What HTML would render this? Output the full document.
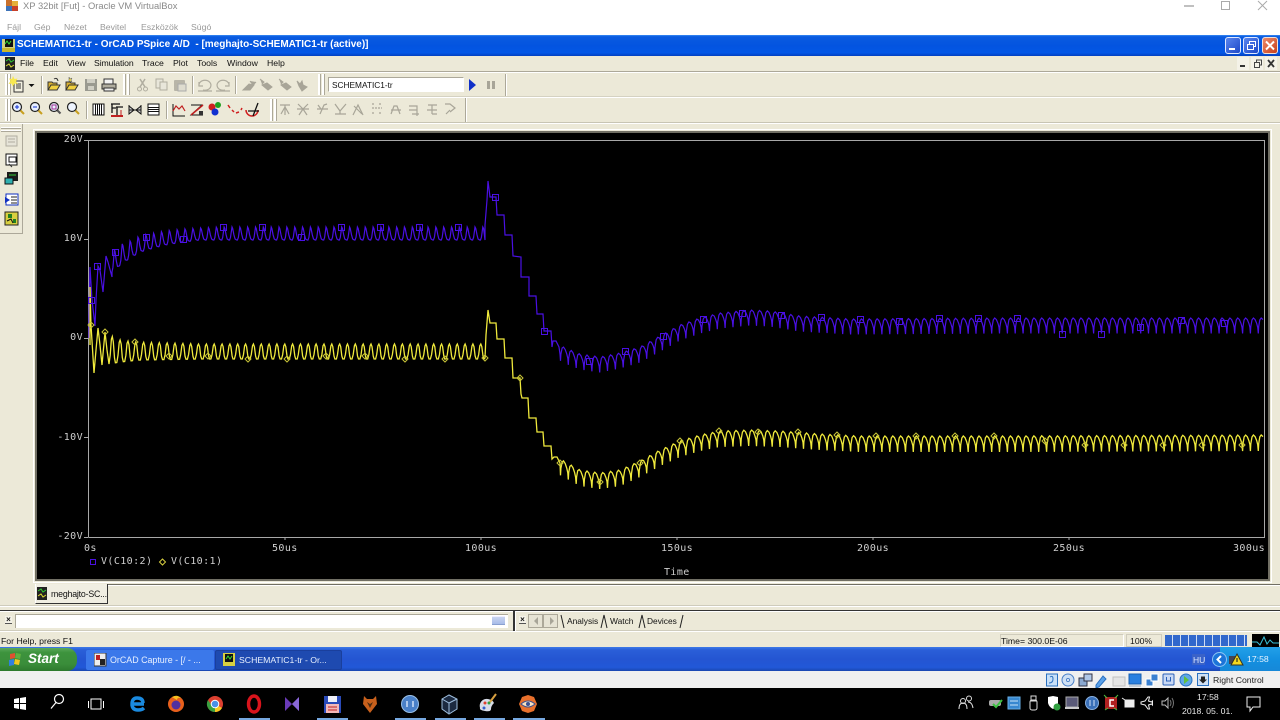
<!DOCTYPE html>
<html><head><meta charset="utf-8"><style>
html,body{margin:0;padding:0;background:#ece9d8;width:1280px;height:720px;overflow:hidden}
body{font-family:"Liberation Sans",sans-serif;font-size:8.7px;color:#111;filter:blur(.3px)}
div,span,svg{position:absolute;box-sizing:border-box}
.t{white-space:nowrap;line-height:12px}
.m{color:#999;font-size:8.7px}
.pl{font-family:"DejaVu Sans Mono",monospace;font-size:10px;letter-spacing:.4px;color:#cfcfcf;white-space:nowrap;line-height:10px}
.mn{top:57px;font-size:8.7px;color:#111;white-space:nowrap;line-height:12px}
.grip{width:3px;background:#fff;border-right:1px solid #aca899;}
.sep{width:2px;background:#fff;border-left:1px solid #aca899}
</style></head><body>

<!-- VirtualBox window chrome -->
<div style="left:0;top:0;width:1280px;height:36px;background:#fff"></div>
<svg style="left:6px;top:0" width="13" height="12" viewBox="0 0 13 12"><rect x="0" y="0" width="6" height="6" fill="#c9702a"/><rect x="6" y="1" width="6" height="5" fill="#e4b03a"/><rect x="0" y="6" width="6" height="5" fill="#3e73b8"/><rect x="6" y="6" width="6" height="5" fill="#c8402a"/></svg>
<div class="t" style="left:23px;top:0px;font-size:9.4px;color:#8a8a8a">XP 32bit [Fut] - Oracle VM VirtualBox</div>
<div class="t m" style="left:7px;top:21px">Fájl</div>
<div class="t m" style="left:34px;top:21px">Gép</div>
<div class="t m" style="left:64px;top:21px">Nézet</div>
<div class="t m" style="left:100px;top:21px">Bevitel</div>
<div class="t m" style="left:141px;top:21px">Eszközök</div>
<div class="t m" style="left:191px;top:21px">Súgó</div>
<div style="left:1184px;top:5px;width:10px;height:2px;background:#c0c0c0"></div>
<div style="left:1221px;top:1px;width:9px;height:9px;border:1px solid #aaa"></div>
<svg style="left:1257px;top:0" width="12" height="12"><path d="M1 1L10 10M10 1L1 10" stroke="#aaa" fill="none"/></svg>

<!-- XP title bar -->
<div style="left:0;top:35px;width:1280px;height:21px;background:linear-gradient(#3a8cf5 0,#0a5be0 8%,#0354e0 50%,#0357e6 85%,#0340c0 100%)"></div>
<svg style="left:2px;top:38px" width="14" height="15"><rect x="0" y="1" width="13" height="13" fill="#d0d080"/><rect x="3" y="1" width="8" height="8" fill="#111"/><path d="M3 6l2-3 2 3 2-3" stroke="#3d3" fill="none"/><rect x="0" y="10" width="13" height="4" fill="#c8b830"/></svg>
<div class="t" style="left:17px;top:39px;color:#fff;font-size:10px;font-weight:bold">SCHEMATIC1-tr - OrCAD PSpice A/D &nbsp;- [meghajto-SCHEMATIC1-tr (active)]</div>
<div style="left:1225px;top:37px;width:16px;height:17px;border:1px solid #dfe8ff;border-radius:3px;background:linear-gradient(135deg,#5a86ee,#1d48c8)"></div>
<div style="left:1229px;top:48px;width:6px;height:2px;background:#fff"></div>
<div style="left:1243px;top:37px;width:16px;height:17px;border:1px solid #dfe8ff;border-radius:3px;background:linear-gradient(135deg,#5a86ee,#1d48c8)"></div>
<svg style="left:1243px;top:37px" width="16" height="17"><path d="M4.500 7.500h6v5h-6zM6.500 7.500v-3h6v5h-2" stroke="#fff" fill="none"/></svg>
<div style="left:1262px;top:37px;width:16px;height:17px;border:1px solid #f0e0d8;border-radius:3px;background:linear-gradient(135deg,#ec8a6a,#c8401c)"></div>
<svg style="left:1262px;top:37px" width="16" height="17"><path d="M4 4.500l8 8M12 4.500l-8 8" stroke="#fff" stroke-width="2" fill="none"/></svg>

<!-- Menu bar -->
<svg style="left:5px;top:57px" width="11" height="13"><rect width="10" height="13" fill="#222"/><path d="M1 4l3-2 2 3 3-2" stroke="#3c3" fill="none"/><path d="M1 9l3-2 2 3 3-2" stroke="#dd3" fill="none"/></svg>
<div class="mn" style="left:20px">File</div>
<div class="mn" style="left:43px">Edit</div>
<div class="mn" style="left:67px">View</div>
<div class="mn" style="left:94px;letter-spacing:-.1px">Simulation</div>
<div class="mn" style="left:142px">Trace</div>
<div class="mn" style="left:173px">Plot</div>
<div class="mn" style="left:197px">Tools</div>
<div class="mn" style="left:227px">Window</div>
<div class="mn" style="left:267px">Help</div>
<svg style="left:1237px;top:57px" width="42" height="14"><rect x="0" y="0" width="12" height="13" fill="#f4f2e8"/><rect x="14" y="0" width="12" height="13" fill="#f4f2e8"/><rect x="28" y="0" width="12" height="13" fill="#f4f2e8"/><rect x="3" y="8" width="5" height="2" fill="#333"/><path d="M17.500 5.500h5v5h-5zM19.500 5.500v-2.500h5v5h-2" stroke="#444" fill="none"/><path d="M31 3l6 7M37 3l-6 7" stroke="#333" stroke-width="1.800" fill="none"/></svg>

<!-- Toolbar separators -->
<div style="left:0;top:71px;width:1280px;height:2px;background:#fff;border-top:1px solid #aca899"></div>
<div style="left:0;top:97px;width:1280px;height:1px;background:#fff"></div>
<div style="left:0;top:96px;width:1280px;height:1px;background:#d5d2c2"></div>
<div style="left:0;top:122px;width:1280px;height:1px;background:#c8c5b4"></div>
<div style="left:0;top:123px;width:1280px;height:1px;background:#fff"></div>

<div class="grip" style="left:5px;top:74px;height:21px"></div><div class="grip" style="left:8px;top:74px;height:21px"></div>
<div class="grip" style="left:5px;top:99px;height:22px"></div><div class="grip" style="left:8px;top:99px;height:22px"></div>
<div class="sep" style="left:41px;top:76px;height:18px"></div>
<div class="grip" style="left:123px;top:74px;height:21px"></div><div class="grip" style="left:127px;top:74px;height:21px"></div>
<div class="sep" style="left:192px;top:76px;height:18px"></div>
<div class="sep" style="left:235px;top:76px;height:18px"></div>
<div class="grip" style="left:318px;top:74px;height:21px"></div><div class="grip" style="left:322px;top:74px;height:21px"></div>
<div class="sep" style="left:86px;top:101px;height:18px"></div>
<div class="sep" style="left:166px;top:101px;height:18px"></div>
<div class="grip" style="left:270px;top:99px;height:22px"></div><div class="grip" style="left:274px;top:99px;height:22px"></div>
<div class="sep" style="left:505px;top:74px;height:22px"></div>
<div class="sep" style="left:465px;top:98px;height:24px"></div>

<!-- Toolbar row 1 icons -->
<svg style="left:0;top:72px" width="330" height="24" fill="none">
<rect x="14" y="9" width="9" height="11" fill="#f4f2e2" stroke="#333"/><path d="M16 12h5M16 14h5M16 16h5" stroke="#333"/>
<path d="M13 4l1.500 3 3-.5-1.500 3 2 2.500-3.500-.5-1.500 3-1.500-3-3 .5 2-3-1.500-2.500 3 .5z" fill="#f8e850"/>
<path d="M28.500 12h6l-3 3z" fill="#111"/>
<path d="M48 18v-8h4l1 1h4v7z" fill="#d8b030" stroke="#333"/><path d="M48 18l3-5h9l-3 5z" fill="#f0d040" stroke="#333"/><path d="M54 7q3-2 4 2" stroke="#333"/>
<path d="M66 18v-8h4l1 1h4v7z" fill="#d8b030" stroke="#333"/><path d="M66 18l3-5h9l-3 5z" fill="#f0d040" stroke="#333"/><path d="M69 5l1 2 2-1-1 2 1 2-2-1-1 1v-2z" fill="#f5e040" stroke="#555" stroke-width=".5"/>
<rect x="85" y="7" width="12" height="12" fill="#9a9a90"/><rect x="87" y="7" width="8" height="4" fill="#d0cfc4"/><rect x="88" y="14" width="6" height="4" fill="#d0cfc4"/>
<rect x="104" y="7" width="9" height="5" fill="#f4f4f4" stroke="#333"/><rect x="102" y="12" width="14" height="5" fill="#b0ad9f" stroke="#333"/><rect x="104" y="16" width="10" height="3" fill="#eee" stroke="#333"/>
<path d="M140 7l5 8M145 7l-5 8" stroke="#b0ad9f" stroke-width="1.500"/><circle cx="139.500" cy="17" r="2" stroke="#b0ad9f"/><circle cx="145.500" cy="17" r="2" stroke="#b0ad9f"/>
<rect x="156" y="7" width="7" height="9" fill="#e8e6da" stroke="#b0ad9f"/><rect x="160" y="10" width="7" height="8" fill="#e8e6da" stroke="#b0ad9f"/>
<rect x="174" y="8" width="11" height="11" rx="1" fill="#b8b5a8"/><rect x="178" y="12" width="8" height="7" fill="#dedccf" stroke="#aaa"/>
<path d="M199 14a6 5 0 1 1 4 4M199 10v4h4M198 19h14" stroke="#b0ad9f" stroke-width="1.200"/>
<path d="M229 14a6 5 0 1 0-4 4M229 10v4h-4M216 19h14" stroke="#b0ad9f" stroke-width="1.200"/>
<g fill="#a8a598" stroke="#a8a598"><path d="M243 18l6-6 5 1-4 5z"/><path d="M250 9l3 4 3-3"/>
<path d="M260 7l4 3-2 2M262 13l6 5 4-3-5-4z"/><path d="M279 7l4 3-2 2M281 13l6 5 4-3-5-4z"/><path d="M297 9l3 3 2-3 1 4 4 2-5 4-3-5z"/></g>
</svg>
<div style="left:328px;top:77px;width:136px;height:15px;background:#fff;border:1px solid #aca899;border-right-color:#fff;border-bottom-color:#fff"></div>
<div class="t" style="left:332px;top:79px;font-size:8.3px">SCHEMATIC1-tr</div>
<svg style="left:466px;top:77px" width="32" height="16"><path d="M3 2l7 6-7 6z" fill="#1030c8"/><rect x="21" y="4" width="3" height="8" fill="#a8a598"/><rect x="26" y="4" width="3" height="8" fill="#a8a598"/></svg>

<!-- Toolbar row 2 icons -->
<svg style="left:0;top:98px" width="470" height="24" fill="none">
<circle cx="17" cy="9" r="4.500" fill="#e8f0ff" stroke="#222" stroke-width="1.200"/><path d="M15 9h4M17 7v4" stroke="#1030d0"/><path d="M20.500 12.500l3.500 3.500" stroke="#c8a020" stroke-width="2"/>
<circle cx="35" cy="9" r="4.500" fill="#e8f0ff" stroke="#222" stroke-width="1.200"/><path d="M33 9h4" stroke="#1030d0"/><path d="M38.500 12.500l3.500 3.500" stroke="#c8a020" stroke-width="2"/>
<circle cx="54" cy="9" r="4.500" fill="#e8f0ff" stroke="#222" stroke-width="1.200"/><rect x="52" y="7" width="4" height="4" stroke="#a03090"/><path d="M57.500 12.500l3 3" stroke="#555" stroke-width="2"/>
<circle cx="72" cy="9" r="4.500" fill="#eef4ff" stroke="#222" stroke-width="1.200"/><path d="M75.500 12.500l3.500 3.500" stroke="#c8a020" stroke-width="2"/>
<rect x="93" y="6" width="11" height="11" fill="#fff" stroke="#111"/><path d="M95.500 6v11M97.500 6v11M99.500 6v11M101.500 6v11" stroke="#111"/>
<path d="M111 6h9M112 6v9M116 9h7M117 9v9M112 10h4" stroke="#111" stroke-width="1.300"/><path d="M111 18h12" stroke="#c02020" stroke-width="2"/><path d="M121 12v5" stroke="#c02020"/>
<path d="M129 7v9l5-4-5-4zM141 7v9l-5-4 5-4z" fill="#ccc" stroke="#111"/><path d="M129 12h12" stroke="#111"/>
<rect x="148" y="6" width="11" height="11" fill="#fff" stroke="#111"/><path d="M148 9.500h11M148 11.500h11M148 13.500h11" stroke="#111"/>
<path d="M173 6v12h12" stroke="#111"/><path d="M173 13l3-5 3 3 3-3 3 5" stroke="#c02020" stroke-width="1.200"/>
<path d="M191 7h11l-11 10h12" stroke="#111"/><path d="M191 17l12-10" stroke="#c02020" stroke-width="1.500"/><path d="M199 13h4v4h-4z" fill="#333"/>
<circle cx="212" cy="9" r="3.500" fill="#d02020"/><circle cx="218" cy="7" r="3" fill="#20a020"/><circle cx="215" cy="14" r="3.500" fill="#1030d0"/>
<path d="M228 7l2 3M232 12l2 2M236 15l3-1M241 12l1-2" stroke="#d02020" stroke-width="1.500"/>
<path d="M246 12a6 6 0 0 0 12 0" stroke="#d02020" stroke-width="1.500"/><path d="M248 13h11M258 5l-5 13" stroke="#111" stroke-width="1.300"/>
<g stroke="#a8a598" stroke-width="1.200">
<path d="M280 7h10M285 7v10M281 16l4-7 4 7"/>
<path d="M298 6l5 5 5-5M299 17l4-6 4 6M297 11h12"/>
<path d="M317 11h11M320 16l4-9 3-1M318 7l3 4"/>
<path d="M335 6l5 7 6-7M335 16h11M340 13v3"/>
<path d="M353 17l5-10 5 10M354 8l8 8"/>
<path d="M372 6h3M379 6h3M372 10h10M372 15h3M379 15h3" stroke-dasharray="2 1"/>
<path d="M391 16l3-8h3l3 8M391 12h10"/>
<path d="M409 8h8v4h-8M417 12v6M412 16h7"/>
<path d="M428 7h9M432 7v9M427 12h10M432 16h5"/>
<path d="M445 6h5l5 4-5 4M446 16l4-4"/></g>
</svg>

<!-- Left dock -->
<div style="left:0;top:124px;width:23px;height:110px;border-right:1px solid #aca899;border-bottom:1px solid #aca899"></div>
<div style="left:1px;top:127px;width:20px;height:2px;background:#fff;border-bottom:1px solid #aca899"></div>
<div style="left:1px;top:130px;width:20px;height:2px;background:#fff;border-bottom:1px solid #aca899"></div>
<svg style="left:3px;top:134px" width="18" height="94" fill="none">
<rect x="3" y="2" width="11" height="10" fill="#e6e4d8" stroke="#b0ad9f"/><path d="M5 5h7M5 8h7" stroke="#b0ad9f"/>
<rect x="3" y="20" width="11" height="11" fill="#fff" stroke="#111"/><rect x="6" y="23" width="7" height="5" stroke="#111"/><path d="M6 30l3 3" stroke="#333"/>
<rect x="4" y="38" width="11" height="9" fill="#1c1c1c"/><path d="M6 41h7" stroke="#3c3"/><rect x="2" y="44" width="8" height="6" fill="#30b0b0" stroke="#111"/>
<rect x="3" y="60" width="12" height="11" fill="#fff" stroke="#1030c0"/><path d="M2 63l5 3-5 3z" fill="#1030c0"/><path d="M8 63h6M8 66h6M8 69h6" stroke="#222"/>
<rect x="2" y="78" width="13" height="13" fill="#d8d040" stroke="#222"/><path d="M5 80h4v4h-4zM10 85h3v4h-3z" fill="#208020"/><path d="M4 87l4-2 2 4" stroke="#111"/>
</svg>

<!-- Plot frame -->
<div style="left:35px;top:131px;width:1235px;height:450px;border:2px solid #716f64;background:#000"></div>
<div style="left:33px;top:129px;width:1239px;height:454px;border:1px solid #fff"></div>

<svg id="plot" style="left:0;top:0" width="1280" height="600" fill="none">
<path d="M88.500 140V537.500M88.500 140.500H1264.500V537.500H88.500" stroke="#a8a8a8"/>
<path d="M84 140.500h4M84 239.500h4M84 338.500h4M84 437.500h4M84 537.500h4" stroke="#a8a8a8"/>
<path d="M285 537v3M481 537v3M677 537v3M873 537v3M1069 537v3" stroke="#a8a8a8"/>
<g id="w"></g>
<rect x="90.500" y="559.500" width="5" height="5" stroke="#4a10e0"/>
<path d="M162.500 559l3 3-3 3-3-3z" stroke="#d8d040"/>
</svg>

<div class="pl" style="right:1197px;top:135px">20V</div>
<div class="pl" style="right:1197px;top:234px">10V</div>
<div class="pl" style="right:1197px;top:333px">0V</div>
<div class="pl" style="right:1197px;top:433px">-10V</div>
<div class="pl" style="right:1197px;top:532px">-20V</div>
<div class="pl" style="left:84px;top:544px">0s</div>
<div class="pl" style="left:272px;top:544px">50us</div>
<div class="pl" style="left:465px;top:544px">100us</div>
<div class="pl" style="left:661px;top:544px">150us</div>
<div class="pl" style="left:857px;top:544px">200us</div>
<div class="pl" style="left:1053px;top:544px">250us</div>
<div class="pl" style="left:1233px;top:544px">300us</div>
<div class="pl" style="left:101px;top:557px">V(C10:2)</div>
<div class="pl" style="left:171px;top:557px">V(C10:1)</div>
<div class="pl" style="left:664px;top:568px">Time</div>

<!-- Tab strip -->
<div style="left:108px;top:584px;width:1172px;height:1px;background:#716f64"></div>
<div style="left:108px;top:585px;width:1172px;height:1px;background:#fff"></div>
<div style="left:35px;top:584px;width:73px;height:20px;background:#f0eee2;border-right:1px solid #333;border-bottom:1px solid #333;border-left:1px solid #fff"></div>
<svg style="left:37px;top:587px" width="11" height="14"><rect width="10" height="13" fill="#222"/><path d="M1 4l3-2 2 3 3-2" stroke="#3c3" fill="none"/><path d="M1 9l3-2 2 3 3-2" stroke="#dd3" fill="none"/></svg>
<div class="t" style="left:51px;top:588px;font-size:8.8px;letter-spacing:-.2px">meghajto-SC...</div>
<div style="left:0;top:605px;width:1280px;height:1px;background:#cfccbc"></div>
<div style="left:0;top:606px;width:1280px;height:1px;background:#fff"></div>
<div style="left:0;top:610px;width:1280px;height:1px;background:#333"></div>
<div style="left:0;top:611px;width:1280px;height:1px;background:#fff"></div>
<div style="left:0;top:630px;width:1280px;height:1px;background:#cfccbc"></div>
<div style="left:0;top:631px;width:1280px;height:1px;background:#fff"></div>

<!-- Command pane -->
<div style="left:5px;top:616px;width:7px;height:8px;background:#f4f2e8;font:bold 8px/7px 'Liberation Sans';text-align:center;border-bottom:1px solid #555">×</div>
<div style="left:15px;top:614px;width:493px;height:14px;background:#fff;border:1px solid #aca899;border-right:0;border-bottom:0"></div>
<div style="left:492px;top:616px;width:13px;height:9px;background:linear-gradient(#c8d4f0,#a8bce8);border-top:1px solid #eef;border-bottom:1px solid #8aa0d0"></div>
<div style="left:513px;top:610px;width:2px;height:21px;background:#333"></div>
<div style="left:515px;top:611px;width:1px;height:20px;background:#fff"></div>
<div style="left:519px;top:616px;width:7px;height:8px;background:#f4f2e8;font:bold 8px/7px 'Liberation Sans';text-align:center;border-bottom:1px solid #555">×</div>
<div style="left:528px;top:614px;width:15px;height:14px;background:#e6e3d4;border:1px solid #aca899"></div>
<div style="left:543px;top:614px;width:15px;height:14px;background:#e6e3d4;border:1px solid #aca899"></div>
<svg style="left:528px;top:612px" width="160" height="17" fill="none"><path d="M10 5l-4 4 4 4z" fill="#a8a598"/><path d="M22 5l4 4-4 4z" fill="#a8a598"/><path d="M33 3l3 13M73 16l3-13 3 13M111 16l3-13 3 13M152 16l3-13" stroke="#222"/></svg>
<div class="t" style="left:567px;top:615px;font-size:8.4px">Analysis</div>
<div class="t" style="left:610px;top:615px;font-size:8.4px">Watch</div>
<div class="t" style="left:647px;top:615px;font-size:8.4px">Devices</div>

<!-- Status bar -->
<div class="t" style="left:1px;top:635px;font-size:8.7px">For Help, press F1</div>
<div style="left:1000px;top:634px;width:124px;height:13px;border:1px solid #cfccbc;border-right-color:#fff;border-bottom-color:#fff"></div>
<div class="t" style="left:1001px;top:635px;font-size:8.7px">Time= 300.0E-06</div>
<div style="left:1126px;top:634px;width:36px;height:13px;border:1px solid #cfccbc"></div>
<div class="t" style="left:1130px;top:635px;font-size:8.7px">100%</div>
<div style="left:1165px;top:635px;width:82px;height:11px;background:repeating-linear-gradient(90deg,#3168cc 0,#3168cc 7px,#cfdcf4 7px,#cfdcf4 8px)"></div>
<svg style="left:1252px;top:634px" width="27" height="13"><rect width="27" height="13" fill="#000"/><path d="M0 8h5l3 3 4-8 3 7 3-4 3 3h6" stroke="#38c0d8" fill="none"/></svg>

<!-- XP taskbar -->
<div style="left:0;top:647px;width:1280px;height:24px;background:linear-gradient(#3d7ae8 0,#2a5fd8 12%,#2455d2 50%,#2158d8 85%,#1a46b0 100%)"></div>
<div style="left:0;top:648px;width:77px;height:23px;border-radius:0 10px 10px 0;background:linear-gradient(#5aa85a 0,#3d933d 20%,#3a8d3a 70%,#2d7a2d 100%)"></div>
<svg style="left:8px;top:652px" width="16" height="15"><path d="M2 2l5-1v5l-5 1z" fill="#e05030"/><path d="M8 1l5 1-1 5-5-1z" fill="#60b040"/><path d="M1 8l5-1v6l-5 1z" fill="#3080e0"/><path d="M7 7l5 1-1 5-5-1z" fill="#f0c820"/></svg>
<div class="t" style="left:28px;top:653px;color:#fff;font-size:13.5px;font-weight:bold;font-style:italic">Start</div>
<div style="left:86px;top:650px;width:128px;height:20px;border-radius:2px;background:#3b78ea"></div>
<div style="left:215px;top:650px;width:127px;height:20px;border-radius:2px;background:#1e4ab0;border:1px solid #1a3f9c"></div>
<svg style="left:94px;top:653px" width="13" height="14"><rect width="12" height="13" fill="#eee" stroke="#333"/><rect x="2" y="2" width="4" height="5" fill="#c02020"/><rect x="6" y="6" width="5" height="6" fill="#222"/></svg>
<svg style="left:223px;top:653px" width="13" height="14"><rect width="12" height="13" fill="#d8d040"/><rect x="2" y="1" width="8" height="8" fill="#111"/><path d="M3 6l2-3 2 3 2-3" stroke="#3d3" fill="none"/></svg>
<div class="t" style="left:110px;top:654px;color:#e8f0ff;font-size:8.9px">OrCAD Capture - [/ - ...</div>
<div class="t" style="left:239px;top:654px;color:#e8f0ff;font-size:8.7px">SCHEMATIC1-tr - Or...</div>
<div style="left:1220px;top:647px;width:60px;height:24px;background:linear-gradient(#22a0e8,#1490e0 50%,#1688d8)"></div>
<div style="left:1192px;top:654px;width:13px;height:11px;background:#3a62c8"></div>
<div class="t" style="left:1193px;top:654px;color:#dfe8ff;font-size:8.5px">HU</div>
<div style="left:1212px;top:652px;width:15px;height:15px;border-radius:50%;background:#1c74d8;border:1px solid #8cc4f4"></div>
<svg style="left:1212px;top:652px" width="40" height="16" fill="none"><path d="M9 4l-3.500 3.500 3.500 3.500" stroke="#fff" stroke-width="2"/><rect x="17" y="4" width="8" height="8" fill="#445"/><path d="M25 2l6 11h-12z" fill="#f4d820" stroke="#332"/><path d="M25 6v4" stroke="#111"/></svg>
<div class="t" style="left:1247px;top:653px;color:#e8f4ff;font-size:8.7px">17:58</div>

<!-- VirtualBox status -->
<div style="left:0;top:671px;width:1280px;height:17px;background:#f0f0f0"></div>
<svg style="left:1045px;top:672px" width="165" height="16" fill="none">
<rect x="1.500" y="2" width="11" height="12" fill="#c8e0f8" stroke="#2a70c0"/><path d="M4 11q4 0 4-4t-3-2" stroke="#2a70c0"/>
<circle cx="23" cy="8" r="6" fill="#cfe0f4" stroke="#4a80c8"/><circle cx="23" cy="8" r="1.500" fill="#fff" stroke="#4a80c8"/>
<rect x="34" y="6" width="8" height="8" fill="#8aa8d0" stroke="#334"/><rect x="39" y="2" width="8" height="7" fill="#b0c8e8" stroke="#334"/>
<path d="M51 13l7-9 3 3-7 8-3 1z" fill="#5aa0e8" stroke="#2a70c0"/>
<rect x="68" y="5" width="12" height="9" fill="#e4e4e4" stroke="#c0c0c0"/>
<rect x="84" y="2" width="12" height="10" fill="#2a80e0" stroke="#1a60b0"/><path d="M84 14h12" stroke="#9ab"/>
<rect x="101" y="7" width="7" height="7" fill="#3a80d0" stroke="#fff"/><rect x="106" y="2" width="7" height="7" fill="#3a80d0" stroke="#fff"/>
<rect x="118" y="2" width="11" height="11" rx="1" fill="#c8d8f4" stroke="#2a60b8"/><path d="M121.500 5v4h4v-4" stroke="#2a60b8"/>
<circle cx="141" cy="8" r="6" fill="#60a8e8" stroke="#2a70c0"/><path d="M139 4l5 4-5 4z" fill="#60c040"/>
</svg>
<div style="left:1197px;top:673px;width:12px;height:13px;background:#cfe0f4;border:1px solid #2a70c0"></div>
<svg style="left:1197px;top:674px" width="12" height="12"><path d="M4 2.500h4v3h2l-4 4-4-4h2z" fill="#222"/></svg>
<div class="t" style="left:1213px;top:674px;font-size:8.7px;color:#222">Right Control</div>

<!-- Win10 taskbar -->
<div style="left:0;top:688px;width:1280px;height:32px;background:#000"></div>
<svg style="left:0;top:688px" width="560" height="32" fill="none">
<path d="M14 11l5-1v5h-5zM20 10l6-1v6h-6zM14 16h5v5l-5-1zM20 16h6v6l-6-1z" fill="#fff"/>
<circle cx="59" cy="11" r="4.500" stroke="#fff" stroke-width="1.200"/><path d="M56 14.500l-5 6" stroke="#fff" stroke-width="1.200"/>
<rect x="91" y="11" width="10" height="10" stroke="#fff"/><path d="M88.500 13v7M103.500 13v7" stroke="#fff"/>
<path d="M144 16h-12q0-6 5-6 6 0 6 5M132 16q0 6 6 6 4 0 6-2" stroke="#1a8ae0" stroke-width="3.400"/>
<circle cx="176" cy="16" r="8" fill="#e8601c"/><circle cx="176" cy="17" r="4.500" fill="#5030a0"/><path d="M172 9q5-3 9 1-4-1-4 2" fill="#f8c020"/>
<circle cx="215" cy="16" r="8" fill="#dd4030"/><path d="M215 16l-7 4a8 8 0 0 0 7 4z" fill="#38a040"/><path d="M215 16l7 4a8 8 0 0 1-7 4z" fill="#f8c820"/><path d="M208 12a8 8 0 0 0 0 8l4-2z" fill="#38a040"/><circle cx="215" cy="16" r="3.800" fill="#4a90e8" stroke="#fff"/>
<ellipse cx="254" cy="16" rx="5.500" ry="8" stroke="#d8141c" stroke-width="3.400"/>
<path d="M285 9l7 7 7-7v14l-7-7-7 7z" fill="#6a3ab8"/><path d="M292 16l7-7v14z" fill="#8a68d8"/>
<rect x="324" y="8" width="17" height="17" fill="#2a4ab8"/><rect x="328" y="8" width="9" height="6" fill="#f0f0f8"/><rect x="326" y="16" width="13" height="9" fill="#f4b8b8"/><path d="M328 19h9M328 22h9" stroke="#c02020"/>
<path d="M364 8l3 3h6l3-3 1 8-7 9-7-9z" fill="#c8601c"/><path d="M367 14l3 2 3-2-3 6z" fill="#4a2a10"/>
<circle cx="410" cy="16" r="8.500" fill="#4a80c8" stroke="#9ac0e8"/><path d="M407 13v6M413 13v6" stroke="#cfe0f8" stroke-width="1.500"/>
<path d="M449 7l8 4v10l-8 5-7-5v-10z" fill="#1c2a40" stroke="#a0c0e0"/><path d="M442 11l7 4 8-4M449 15v10" stroke="#a0c0e0"/>
<path d="M480 20a7 7 0 0 1 8-9q5 1 6 4-3 3-3 6t-6 2-5-3z" fill="#d8dce8"/><circle cx="485" cy="15" r="1.500" fill="#e04030"/><circle cx="489" cy="15" r="1.500" fill="#30a040"/><circle cx="484" cy="20" r="1.500" fill="#3060d0"/><path d="M490 14l6-8" stroke="#d8a040" stroke-width="2"/>
<path d="M528 7l6 2 3 7-3 7-6 2-6-2-3-7 3-7z" fill="#e8702c"/><path d="M521 16q7-6 14 0-7 6-14 0z" fill="#f8e0c0" stroke="#3a5090"/><circle cx="528" cy="16" r="2" fill="#3a5090"/>
</svg>
<div style="left:239px;top:718px;width:31px;height:2px;background:#76a8e0"></div>
<div style="left:317px;top:718px;width:31px;height:2px;background:#76a8e0"></div>
<div style="left:395px;top:718px;width:31px;height:2px;background:#76a8e0"></div>
<div style="left:435px;top:718px;width:31px;height:2px;background:#76a8e0"></div>
<div style="left:474px;top:718px;width:31px;height:2px;background:#76a8e0"></div>
<div style="left:513px;top:718px;width:32px;height:2px;background:#76a8e0"></div>

<!-- Win10 tray -->
<svg style="left:955px;top:694px" width="325" height="26" fill="none">
<circle cx="8" cy="7" r="2.500" stroke="#ddd"/><circle cx="14" cy="4.500" r="2.500" stroke="#ddd"/><path d="M4 15q0-6 4-6t4 6M13 8q4 0 5 6" stroke="#ddd"/>
<rect x="34" y="6" width="12" height="6" rx="2" fill="#aaa"/><path d="M38 10l3 3 6-7" stroke="#3cc040" stroke-width="2"/>
<rect x="53" y="3" width="12" height="12" fill="#3888d0" stroke="#68b0e8"/><path d="M55 7h8M55 11h8" stroke="#c8e4f8"/>
<rect x="76" y="2" width="5" height="5" stroke="#ddd"/><rect x="75" y="6" width="7" height="10" rx="2" stroke="#ddd"/>
<path d="M93 3l5-1 5 1v6q-1 4-5 6-4-2-5-6z" fill="#fff"/><circle cx="102" cy="13" r="3.500" fill="#30a040"/>
<rect x="111" y="3" width="12" height="10" fill="#5a5a78" stroke="#aaa"/><path d="M110 14h14" stroke="#ccc" stroke-width="2"/>
<circle cx="137" cy="9" r="6.500" fill="#3a70b8" stroke="#88b0e0"/><path d="M135 6v6M139 6v6" stroke="#cfe0f8"/>
<rect x="150" y="3" width="12" height="12" fill="#b02020"/><path d="M149 1l3 3M163 1l-3 3M150 16l3-2M162 16l-3-2" stroke="#4ac040"/><path d="M159 6h-4v6h4" stroke="#fff" stroke-width="1.500"/>
<rect x="170" y="6" width="9" height="7" fill="#eee" stroke="#eee"/><path d="M167 4l3 2" stroke="#eee"/>
<path d="M186 8l4-1 3-4h1.500l-1 4 3 1 1-1v4l-1-1-3 1 1 4h-1.500l-3-4-4-1z" stroke="#eee"/>
<path d="M207 7h3l3-3v10l-3-3h-3z" stroke="#bbb"/><path d="M215 6q2 3 0 6M217 4q3 5 0 10" stroke="#777"/>
<path d="M292 3h13v10h-7l-3 4v-4h-3z" stroke="#eee"/>
</svg>
<div class="t" style="left:1197px;top:691px;color:#e8e8e8;font-size:8.7px">17:58</div>
<div class="t" style="left:1182px;top:705px;color:#e8e8e8;font-size:8.7px">2018. 05. 01.</div>

<script>
(function(){
function interp(t,x){if(x<=t[0][0])return t[0][1];for(var i=1;i<t.length;i++){if(x<=t[i][0]){var a=t[i-1],b=t[i];return a[1]+(b[1]-a[1])*(x-a[0])/(b[0]-a[0]);}}return t[t.length-1][1];}
var P=7.84;
function cyc(x0,x1,shape,top,bot,out){for(var k=0;;k++){var st=x0+k*P;if(st>=x1)break;for(var i=0;i<shape.length;i++){var x=st+shape[i][0]*P;if(x>x1)return;var tp=interp(top,x),bt=typeof bot=="number"?tp+bot:interp(bot,x);out.push([x,tp+shape[i][1]*(bt-tp)]);}}}
var sB=[[0,1],[.12,.8],[.3,0],[.4,.12],[.55,.6],[.7,.92],[.9,1]];
var sY=[[0,1],[.15,.7],[.3,.12],[.42,0],[.55,.18],[.7,.8],[.82,1]];
var sT=[[0,1],[.05,.55],[.2,.12],[.38,0],[.6,.1],[.8,.35],[.93,.6]];
var bT=[[114,250],[122,244],[130,241],[140,236],[150,234],[165,231],[183,229],[220,227],[480,227]];
var bB=[[114,272],[120,265],[130,258],[140,252],[150,249],[165,245],[183,242],[200,240],[480,240]];
var b=[[89,338],[89,320],[90,267],[92,300],[95,326],[96,300],[98,266],[100,270],[103,292],[106,256],[108,262],[112,277]];
cyc(112,484,sB,bT,bB,b);
b=b.concat([[485,240],[485,225],[487,200],[488,181],[490,197],[496,197],[497,215],[504,215],[505,235],[512,235],[513,256],[521,257],[521,277],[529,277],[529,296],[536,296],[537,314],[543,314],[544,331],[551,331],[552,347],[553,341],[556,341],[559,347],[560,354]]);
var b3=[[560,345],[565,348],[580,354],[600,357],[620,353],[640,347],[660,336],[680,325],[700,318],[720,313],[750,310],[770,311],[800,316],[850,319],[1000,318],[1265,318]];
cyc(560.5,1263,sT,b3,15.5,b);
var yT=[[109,334],[113,337],[120,340],[135,342],[200,344],[480,344]];
var yB=[[109,364],[120,362],[140,360],[200,359],[480,359]];
var y=[[90,345],[90,287],[91,325],[94,373],[96,350],[98,328],[100,345],[102,365],[105,332],[107,350],[109,364]];
cyc(109,484,sY,yT,yB,y);
y=y.concat([[485,358],[486,335],[488,310],[490,323],[496,323],[497,339],[504,339],[505,358],[512,358],[513,378],[520,378],[521,394],[522,398],[528,398],[529,418],[536,418],[537,432],[543,432],[544,446],[551,446],[552,459],[554,457],[557,457],[560,463]]);
var y3=[[560,459],[580,470],[600,473],[620,470],[640,461],[660,450],[680,441],[700,435],[720,431],[750,430],[780,431],[820,434],[860,436],[1000,436],[1265,435]];
cyc(560.5,1263,sT,y3,16,y);
function path(p){return "M"+p.map(function(q){return q[0].toFixed(1)+" "+q[1].toFixed(1)}).join("L");}
function atX(p,x){for(var i=1;i<p.length;i++){if(p[i][0]>=x){return p[i][1];}}return p[p.length-1][1];}
var h='<path d="'+path(b)+'" stroke="#4a10e4" stroke-width="1.200"/><path d="'+path(y)+'" stroke="#f0ea3c" stroke-width="1.300"/>';
var bm=[91,97,115,146,183,223,262,301,341,380,419,458,495,544,589,625,663,703,742,781,821,860,899,939,978,1017,1062,1101,1140,1181,1224];
bm.forEach(function(x){var v=Math.round(atX(b,x));h+='<rect x="'+(x-3)+'.5" y="'+(v-3)+'.5" width="6" height="6" stroke="#4a10e4"/>';});
var ym=[91,105,135,169,208,248,287,326,365,405,445,485,520,560,600,640,680,719,758,798,837,876,916,955,994,1045,1085,1124,1163,1202,1242];
ym.forEach(function(x){var v=Math.round(atX(y,x));h+='<path d="M'+x+' '+(v-3)+'l3 3-3 3-3-3z" stroke="#c8c438"/>';});
document.getElementById("w").innerHTML=h;
})();
</script>
</body></html>
